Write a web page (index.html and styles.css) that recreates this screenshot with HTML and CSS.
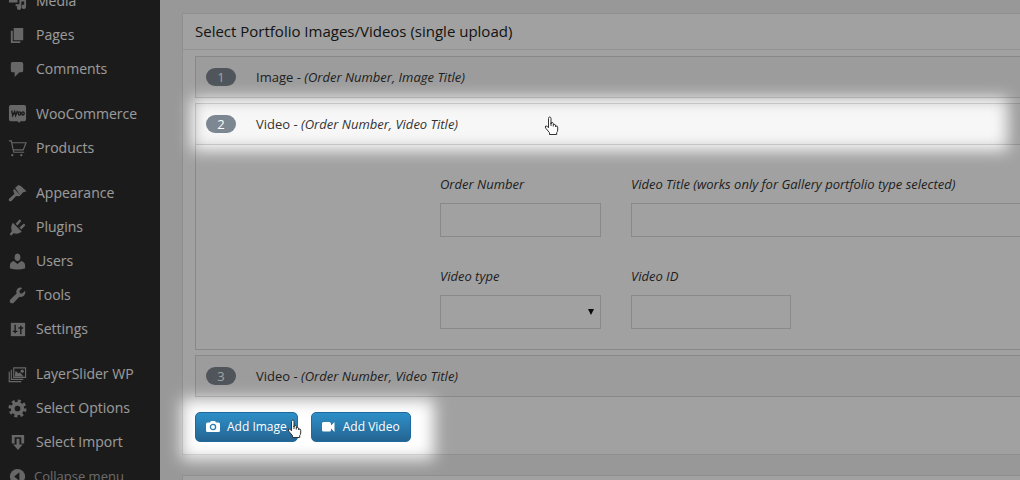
FILE: index.html
```html
<!DOCTYPE html>
<html lang="en">
<head>
<meta charset="utf-8">
<title>Portfolio Images/Videos</title>
<link rel="stylesheet" href="styles.css">
</head>
<body>
<div class="shell">
  <nav class="sidebar">
    <ul class="menu">
      <li><a href="#"><svg class="icon" viewBox="0 0 20 20"><path d="M1 5h9v6H1zM8 13h6v2H8zM12 7h7v8.500a2.300 2.300 0 1 1-2-2.200V10h-3v6.500a2.300 2.300 0 1 1-2-2.200z"/></svg>Media</a></li>
      <li><a href="#"><svg class="icon" viewBox="0 0 20 20"><path d="M6 2h10v13H6zM3 5h2v11h8v2H3z"/></svg>Pages</a></li>
      <li><a href="#"><svg class="icon" viewBox="0 0 20 20"><path d="M5 2h9q2 0 2 2v7q0 2-2 2h-2l-5 5v-5H5q-2 0-2-2V4q0-2 2-2z"/></svg>Comments</a></li>
      <li class="gap"><a href="#"><svg class="icon" viewBox="0 0 20 20"><path d="M3 0h14q2 0 2 2v13q0 2-2 2h-4l-1 2-2-2H3q-2 0-2-2V2q0-2 2-2z"/><path class="cut" d="M4 6l1 5 2-4 1 4 2-5M12 7.200a1.300 1.700 0 1 0 .1 0M15.700 7.200a1.300 1.700 0 1 0 .1 0"/></svg>WooCommerce</a></li>
      <li><a href="#"><svg class="icon" viewBox="0 0 20 20"><path class="line" d="M1 2h2.500l2.500 12h11M4 4h15l-3 7.500H5.500"/><circle cx="4.500" cy="17" r="1.200"/><circle cx="14" cy="17" r="1.200"/></svg>Products</a></li>
      <li class="gap"><a href="#"><svg class="icon" viewBox="0 0 20 20"><path d="M7.500 4l3.500-3 2.500 1 6 5.500-4 1.500-2.500 3zM6.500 5l6.500 7-2 1-2.500-.5L4 17.500q-2 1.200-3 0-.8-1.500.7-2.500l5-4.500L5.500 7z"/></svg>Appearance</a></li>
      <li><a href="#"><svg class="icon" viewBox="0 0 20 20"><path d="M5 5l9.500 9.500q-4.500 3-8.500 1.500L3.500 18.500Q2 18.200 2 16.700L4 14Q2.500 9 5 5zM8 6l4-4.500q1.800 0 1.800 1.800L10 8zM12 10l4.500-4q1.800.2 1.500 2L14 12z"/></svg>Plugins</a></li>
      <li><a href="#"><svg class="icon" viewBox="0 0 20 20"><ellipse cx="10" cy="5.500" rx="3" ry="4"/><path d="M6 9.500l4 3 4-3q4 1 4 5v2.500q-3 1.500-8 1.500T2 17v-2.500q0-4 4-5z"/></svg>Users</a></li>
      <li><a href="#"><svg class="icon" viewBox="0 0 20 20"><path d="M15 2l-3 3 .5 2.500L15 8l3-3q1 3-1 5t-5 1.300L6 17.500q-1.800 1.500-3.500 0t0-3.300L9 8Q8 5 10 3t5-1z"/></svg>Tools</a></li>
      <li><a href="#"><svg class="icon" viewBox="0 0 20 20"><path d="M3 3h15v14H3z"/><path class="cut" d="M7.500 5v9M5 12h5M13.500 6v9M11 8.500h5"/></svg>Settings</a></li>
      <li class="gap"><a href="#"><svg class="icon" viewBox="0 0 20 20"><path class="line" d="M6 3h12.500v10H6zM3.500 5v10.200H16M1.300 7v10.500H14"/><path d="M7 12l1-6 3 3 1.500-1 4 4z"/><circle cx="15" cy="6.500" r="1.700"/></svg>LayerSlider WP</a></li>
      <li><a href="#"><svg class="icon" viewBox="0 0 20 20"><circle class="teeth" cx="10" cy="10" r="7.500"/><circle class="ring" cx="10" cy="10" r="5"/></svg>Select Options</a></li>
      <li><a href="#"><svg class="icon" viewBox="0 0 20 20"><path d="M4 2h13v9h-3V4.500H7V11H4z"/><path d="M9 6h3v6h3.500l-5 6-5-6H9z"/></svg>Select Import</a></li>
      <li class="collapse"><button type="button"><svg class="icon" viewBox="0 0 20 20"><circle cx="10" cy="10" r="8"/><path class="hole" d="M12 5.500v9L6.500 10z"/></svg>Collapse menu</button></li>
    </ul>
  </nav>

  <main class="content">
    <section class="panel">
      <h2 class="panel-title">Select Portfolio Images/Videos (single upload)</h2>
      <div class="panel-body">
        <article class="entry">
          <header class="entry-head"><span class="badge">1</span><span>Image - <em>(Order Number, Image Title)</em></span></header>
        </article>
        <article class="entry">
          <header class="entry-head"><span class="badge">2</span><span>Video - <em>(Order Number, Video Title)</em></span></header>
          <form class="fields">
            <div class="field"><label for="order">Order Number</label><input id="order" type="text"></div>
            <div class="field"><label for="title">Video Title (works only for Gallery portfolio type selected)</label><input id="title" type="text"></div>
            <div class="field"><label for="type">Video type</label>
              <div class="select-wrap"><select id="type"><option></option></select><svg class="arrow" viewBox="0 0 6 6"><path d="M0 0h6L3 6z"/></svg></div></div>
            <div class="field short"><label for="video-id">Video ID</label><input id="video-id" type="text"></div>
          </form>
        </article>
        <article class="entry">
          <header class="entry-head"><span class="badge">3</span><span>Video - <em>(Order Number, Video Title)</em></span></header>
        </article>
        <div class="actions">
          <button class="btn" type="button"><svg class="btn-icon" viewBox="0 0 14 12"><path d="M4 1.500 5 0h4l1 1.500h2.500Q14 1.500 14 3v6.500q0 1.500-1.500 1.500h-11Q0 11 0 9.500V3q0-1.500 1.500-1.500z"/><circle class="lens" cx="7" cy="6" r="2.600"/></svg>Add Image</button>
          <button class="btn" type="button"><svg class="btn-icon" viewBox="0 0 14 12"><path d="M1.500 1H7q2 0 2 2v1.500L12.500 1v10L9 7.500V9q0 1.500-1.500 1.500h-6Q0 10.500 0 9V2.500Q0 1 1.500 1z"/></svg>Add Video</button>
        </div>
      </div>
    </section>
    <section class="panel next"></section>
  </main>
</div>

<svg class="spotlight" aria-hidden="true">
  <defs>
    <filter id="soft" x="-20%" y="-60%" width="140%" height="220%"><feGaussianBlur stdDeviation="8"/></filter>
    <mask id="holes" maskUnits="userSpaceOnUse" x="0" y="0" width="100%" height="100%">
      <rect width="100%" height="100%" fill="#fff"/>
      <rect x="192" y="98" width="816" height="52" rx="4" filter="url(#soft)"/>
      <rect x="181" y="399" width="253" height="61" rx="4" filter="url(#soft)"/>
    </mask>
    <symbol id="hand" viewBox="0 0 16 20">
      <path fill="#fff" stroke="#333" d="M4.500 11V2.500q0-1.500 1.200-1.500T7 2.500V8l.3-1.500q1.700-.5 2 1l.2 1q1.800-.6 2 .7l.2.900q1.800-.5 2 1V14q0 1.500-1 2.500v2H5.500v-1.800L2 12.500Q.7 10.700 1.700 10t2.800 1.800z"/>
      <path fill="none" stroke="#333" d="M7 7v3M9.300 8v2.500M11.600 9.500V11"/>
    </symbol>
  </defs>
  <rect class="shade" width="100%" height="100%" mask="url(#holes)"/>
  <use href="#hand" x="544" y="116" width="16" height="20"/>
  <use href="#hand" x="287" y="419" width="16" height="20"/>
</svg>
</body>
</html>
```
FILE: styles.css
```css
* { box-sizing: border-box; }

body {
  margin: 0;
  height: 100vh;
  overflow: hidden;
  position: relative;
  background: #f1f1f1;
  color: #333;
  font: 13px/20px "Open Sans", sans-serif;
}

.shell { display: flex; height: 100vh; overflow: hidden; }

.sidebar { flex: 0 0 160px; background: #2c2c2c; }

.menu { list-style: none; margin: -16px 0 0; padding: 0; }
.menu .gap { margin-top: 11px; }
.menu a,
.menu button {
  display: flex;
  align-items: center;
  gap: 9px;
  width: 100%;
  height: 34px;
  padding: 0 8px;
  border: 0;
  background: none;
  color: #f4f4f4;
  font: 14px/20px "Open Sans", sans-serif;
  text-decoration: none;
  white-space: nowrap;
}
.menu .collapse button { gap: 7px; color: #aaa; font-size: 13px; }

.icon { flex: none; width: 19px; height: 19px; fill: #a4a4a4; }
.icon .cut { fill: none; stroke: #2c2c2c; stroke-width: 1.5; }
.icon .hole { fill: #2c2c2c; }
.icon .line { fill: none; stroke: #a4a4a4; stroke-width: 1.2; }
.icon .teeth { fill: none; stroke: #a4a4a4; stroke-width: 4; stroke-dasharray: 3 2.89; }
.icon .ring { fill: none; stroke: #a4a4a4; stroke-width: 4; }

.content { flex: 1; min-width: 0; padding: 13px 0 0 22px; }

.panel {
  margin-right: -20px;
  background: #fff;
  border: 1px solid #e2e2e2;
}
.panel.next { margin-top: 20px; height: 40px; }

.panel-title {
  margin: 0;
  padding: 7px 12px 8px;
  border-bottom: 1px solid #e8e8e8;
  color: #222;
  font-size: 15px;
  font-weight: 400;
  line-height: 20px;
}
.panel-body { padding: 6px 12px 12px; }

.entry { margin-bottom: 5px; border: 1px solid #d8d8d8; }
.entry-head {
  display: flex;
  align-items: center;
  gap: 20px;
  height: 40px;
  padding-left: 10px;
  background: #f7f7f7;
}
.badge {
  width: 30px;
  height: 18px;
  border-radius: 9px;
  background: #7d8791;
  color: #fff;
  line-height: 18px;
  text-align: center;
}

.fields {
  display: grid;
  grid-template-columns: 161px 1fr;
  gap: 29px 30px;
  padding: 29px 0 20px 244px;
  border-top: 1px solid #d8d8d8;
}
.field { display: flex; flex-direction: column; gap: 9px; font-style: italic; }
.field input,
.field select {
  width: 100%;
  height: 34px;
  padding: 0 8px;
  border: 1px solid #dadada;
  border-radius: 0;
  background: #fff;
  appearance: none;
}
.short input { width: 160px; }
.select-wrap { position: relative; display: flex; }
.arrow { position: absolute; right: 7px; top: 14px; width: 6px; height: 6px; fill: #111; }

.actions { display: flex; gap: 13px; padding-top: 10px; }
.btn {
  display: flex;
  align-items: center;
  gap: 7px;
  height: 30px;
  padding: 0 10px;
  border: 1px solid #1f6a9e;
  border-radius: 5px;
  background: linear-gradient(#2e90c8, #246492);
  color: #fff;
  font: 12px/20px "Open Sans", sans-serif;
  white-space: nowrap;
}
.btn-icon { width: 14px; height: 12px; fill: #fff; }
.btn-icon .lens { fill: none; stroke: #2a7db0; stroke-width: 1.3; }

.spotlight {
  position: absolute;
  inset: 0;
  width: 100%;
  height: 100%;
  pointer-events: none;
}
.shade { fill: #000; fill-opacity: 0.37; }
```
